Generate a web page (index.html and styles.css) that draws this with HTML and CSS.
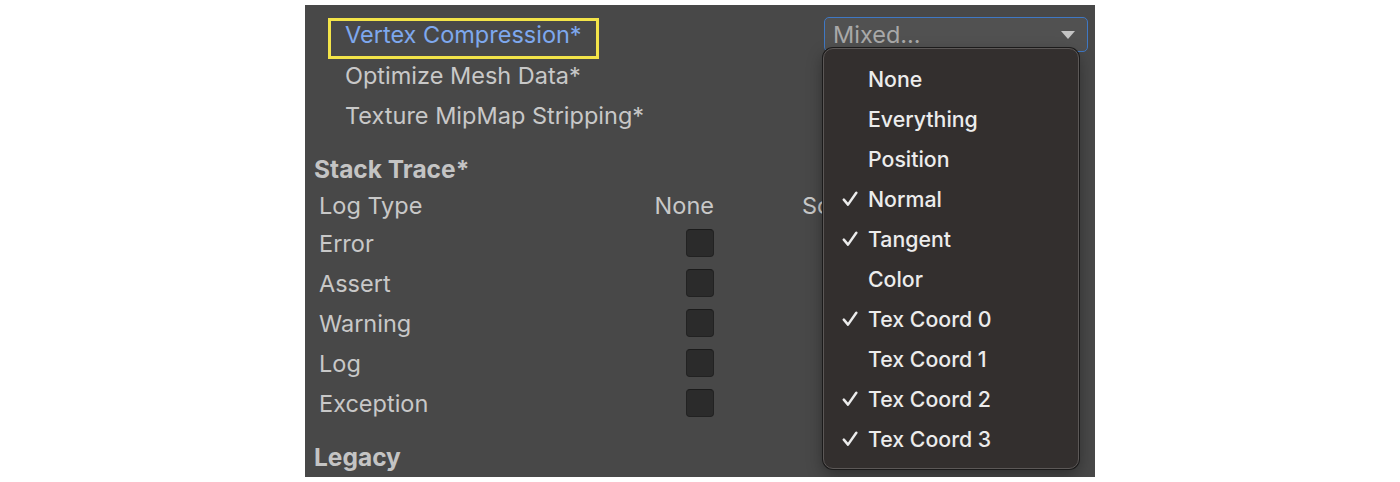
FILE: index.html
```html
<!DOCTYPE html>
<html lang="en">
<head>
<meta charset="utf-8">
<title>Player Settings</title>
<link rel="stylesheet" href="styles.css">
</head>
<body>
<div class="panel">
  <div class="row row-first">
    <span class="hl-label">Vertex Compression*</span>
    <div class="dropdown">
      <span class="dd-text">Mixed...</span>
      <span class="dd-arrow"></span>
    </div>
  </div>
  <div class="row"><span class="sub-label">Optimize Mesh Data*</span></div>
  <div class="row"><span class="sub-label">Texture MipMap Stripping*</span></div>

  <div class="section-title st-stack">Stack Trace*</div>
  <div class="grid-row head">
    <span class="cell-label">Log Type</span>
    <span class="cell-col">None</span>
    <span class="cell-col3"><span class="clip">ScriptOnly</span></span>
  </div>
  <div class="grid-row"><span class="cell-label">Error</span><span class="cell-col"><span class="checkbox"></span></span><span class="cell-col3"></span></div>
  <div class="grid-row"><span class="cell-label">Assert</span><span class="cell-col"><span class="checkbox"></span></span><span class="cell-col3"></span></div>
  <div class="grid-row"><span class="cell-label">Warning</span><span class="cell-col"><span class="checkbox"></span></span><span class="cell-col3"></span></div>
  <div class="grid-row"><span class="cell-label">Log</span><span class="cell-col"><span class="checkbox"></span></span><span class="cell-col3"></span></div>
  <div class="grid-row"><span class="cell-label">Exception</span><span class="cell-col"><span class="checkbox"></span></span><span class="cell-col3"></span></div>

  <div class="section-title st-legacy">Legacy</div>

  <div class="menu">
    <div class="item"><span class="check"></span><span>None</span></div>
    <div class="item"><span class="check"></span><span>Everything</span></div>
    <div class="item"><span class="check"></span><span>Position</span></div>
    <div class="item"><span class="check"><svg viewBox="0 0 16 16" width="16" height="16"><path d="M1.8 8.6 L6 13.6 L14.3 1.8" fill="none" stroke="#ececec" stroke-width="2.5" stroke-linecap="round" stroke-linejoin="round"/></svg></span><span>Normal</span></div>
    <div class="item"><span class="check"><svg viewBox="0 0 16 16" width="16" height="16"><path d="M1.8 8.6 L6 13.6 L14.3 1.8" fill="none" stroke="#ececec" stroke-width="2.5" stroke-linecap="round" stroke-linejoin="round"/></svg></span><span>Tangent</span></div>
    <div class="item"><span class="check"></span><span>Color</span></div>
    <div class="item"><span class="check"><svg viewBox="0 0 16 16" width="16" height="16"><path d="M1.8 8.6 L6 13.6 L14.3 1.8" fill="none" stroke="#ececec" stroke-width="2.5" stroke-linecap="round" stroke-linejoin="round"/></svg></span><span>Tex Coord 0</span></div>
    <div class="item"><span class="check"></span><span>Tex Coord 1</span></div>
    <div class="item"><span class="check"><svg viewBox="0 0 16 16" width="16" height="16"><path d="M1.8 8.6 L6 13.6 L14.3 1.8" fill="none" stroke="#ececec" stroke-width="2.5" stroke-linecap="round" stroke-linejoin="round"/></svg></span><span>Tex Coord 2</span></div>
    <div class="item"><span class="check"><svg viewBox="0 0 16 16" width="16" height="16"><path d="M1.8 8.6 L6 13.6 L14.3 1.8" fill="none" stroke="#ececec" stroke-width="2.5" stroke-linecap="round" stroke-linejoin="round"/></svg></span><span>Tex Coord 3</span></div>
  </div>
</div>
</body>
</html>
```
FILE: styles.css
```css
html, body {
  margin: 0;
  padding: 0;
  background: #ffffff;
}
body {
  padding: 5px 0;
  font-family: Inter, "Liberation Sans", sans-serif;
}
.panel {
  position: relative;
  width: 790px;
  height: 472px;
  margin: 0 auto;
  box-sizing: border-box;
  padding-top: 10px;
  background: #484848;
  color: #c8c8c8;
  font-size: 23.5px;
  overflow: hidden;
}
.row {
  display: flex;
  align-items: center;
  height: 40px;
  padding-left: 40px;
}
.row-first {
  align-items: flex-start;
  padding-left: 23px;
  padding-right: 7px;
}
.hl-label {
  margin-top: 3px;
  box-sizing: content-box;
  height: 27px;
  line-height: 27px;
  padding: 0 14px 8px;
  border: 3px solid #f3e449;
  color: #7ea8ee;
}
.sub-label { line-height: 27px; }
.dropdown {
  margin-left: auto;
  margin-top: 2px;
  width: 264px;
  height: 35px;
  box-sizing: border-box;
  border: 1px solid #3f78c4;
  border-radius: 5px;
  background: #515151;
  display: flex;
  align-items: center;
  padding: 0 12px 0 8px;
}
.dd-text {
  color: #a9a9a9;
  flex: 1;
}
.dd-arrow {
  width: 0;
  height: 0;
  border-left: 7px solid transparent;
  border-right: 7px solid transparent;
  border-top: 8px solid #c4c4c4;
}
.section-title {
  font-weight: 700;
  font-size: 24.5px;
  padding-left: 9px;
  color: #c4c4c4;
  display: flex;
  align-items: center;
}
.st-stack {
  margin-top: 15px;
  height: 38px;
}
.st-legacy {
  margin-top: 14px;
  height: 40px;
}
.grid-row {
  display: grid;
  grid-template-columns: 321px 74px 109px;
  align-items: center;
  height: 40px;
  padding-left: 14px;
}
.grid-row.head { height: 35px; }
.cell-col {
  display: flex;
  justify-content: flex-end;
}
.cell-col3 {
  padding-left: 88px;
  overflow: hidden;
  white-space: nowrap;
}
.clip {
  display: block;
  width: 21px;
  overflow: hidden;
}
.checkbox {
  display: block;
  width: 28px;
  height: 28px;
  box-sizing: border-box;
  border-radius: 4px;
  background: #2b2b2b;
  border: 1px solid #222222;
  border-top-color: #1b1b1b;
}
.menu {
  position: absolute;
  left: 518px;
  top: 43px;
  width: 256px;
  height: 421px;
  box-sizing: border-box;
  padding-top: 10px;
  background: #332f2e;
  border: 1px solid #5c5857;
  border-radius: 10px;
  box-shadow: 0 0 0 1px #1c1b1b, 0 6px 16px rgba(0, 0, 0, 0.35);
  color: #ececec;
  font-size: 21.3px;
  font-weight: 500;
}
.item {
  display: flex;
  align-items: center;
  height: 40px;
  padding-left: 18px;
}
.check {
  width: 16px;
  height: 16px;
  margin-right: 10px;
  display: flex;
}
```
